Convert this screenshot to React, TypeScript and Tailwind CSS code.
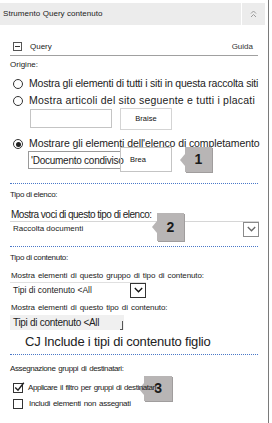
import React from "react";

const Dotted = ({ className }: { className: string }) => (
  <div className={`mx-[10px] border-t border-dotted border-[#4a78c8] ${className}`} />
);

const Callout = ({ n, className }: { n: string; className: string }) => (
  <div className={`absolute flex items-center justify-center bg-[#b8b5b5] text-[14px] font-bold text-[#1a1a1a] shadow-[1px_1px_0_#a09d9d] ${className}`}>
    <span className="absolute -left-[5px] top-1/2 -translate-y-1/2 border-y-[6px] border-r-[5px] border-y-transparent border-r-[#b8b5b5]" />
    {n}
  </div>
);

const Radio = ({ checked }: { checked?: boolean }) => (
  <span className="flex h-[10px] w-[10px] shrink-0 items-center justify-center rounded-full border border-[#333] bg-white">
    {checked && <span className="h-[5px] w-[5px] rounded-full bg-[#222]" />}
  </span>
);

const Chevron = ({ color }: { color: string }) => (
  <svg width="9" height="6" viewBox="0 0 9 6" fill="none" stroke={color} strokeWidth="1.3">
    <path d="M0.8 1 L4.5 4.8 L8.2 1" />
  </svg>
);

const Check = ({ checked }: { checked?: boolean }) => (
  <span className="relative flex h-[10px] w-[10px] shrink-0 border border-[#333] bg-white">
    {checked && (
      <svg className="absolute -top-[2px] left-0" width="11" height="10" viewBox="0 0 11 10" fill="none" stroke="#222" strokeWidth="1.4">
        <path d="M1.2 5.5 L4 8.3 L9.8 0.8" />
      </svg>
    )}
  </span>
);

export default function App() {
  return (
    <div className="relative h-[423px] w-[272px] overflow-hidden whitespace-nowrap bg-white font-['Liberation_Sans',Arial,sans-serif] text-[#222]">
      <div className="absolute right-[3px] top-0 h-full w-px bg-[#7a7a7a]" />
      <div className="w-[268px]">
        {/* header */}
        <div className="mt-[3px] flex h-[22px] w-[265px] bg-[#ececec]">
          <div className="flex flex-1 items-center border-r border-white pl-[3px] text-[8px] tracking-[0.05px]">Strumento Query contenuto</div>
          <div className="flex w-[23px] items-center justify-center">
            <svg width="7" height="8" viewBox="0 0 7 8" fill="none" stroke="#9a9a9a" strokeWidth="1">
              <path d="M1 3.5 L3.5 1 L6 3.5 M1 7 L3.5 4.5 L6 7" />
            </svg>
          </div>
        </div>

        {/* query row */}
        <div className="mx-[10px] mt-[16px] flex h-[15px] items-start border-b border-[#a0a0a0] text-[8px] leading-[11px]">
          <span className="ml-[3px] mt-[1px] flex h-[9px] w-[9px] items-center justify-center border border-[#555]">
            <span className="h-px w-[5px] bg-[#333]" />
          </span>
          <span className="ml-[8px]">Query</span>
          <span className="ml-auto mr-[5px] text-[#333]">Guida</span>
        </div>

        <div className="ml-[10px] mt-[3px] text-[8px] leading-[11px]">Origine:</div>

        {/* origin radios */}
        <div className="ml-[13px] mt-[6px] flex h-[16px] items-center gap-[6px] text-[10.5px] tracking-[-0.2px]">
          <Radio />
          <span>Mostra gli elementi di tutti i siti in questa raccolta siti</span>
        </div>
        <div className="ml-[13px] mt-px flex h-[16px] items-center gap-[6px] text-[10.5px] tracking-[0.22px]">
          <Radio />
          <span>Mostra articoli del sito seguente e tutti i placati</span>
        </div>
        <div className="-mt-px ml-[30px] flex items-start">
          <div className="mt-px h-[19px] w-[82px] border border-[#c4c4c4]" />
          <div className="ml-[8px] flex h-[22px] w-[52px] items-center justify-center border border-[#d4d4d4] text-[7.5px] text-[#111]">Braise</div>
        </div>

        <div className="ml-[13px] mt-[6px] flex h-[16px] items-center gap-[6px] text-[10.5px] tracking-[-0.1px]">
          <Radio checked />
          <span>Mostrare gli elementi dell'elenco di completamento</span>
        </div>
        <div className="relative -mt-[5px] ml-[28px] flex items-start">
          <div className="mt-[4px] flex h-[18px] w-[93px] items-center border border-[#9a9a9a] pl-[2px] text-[10px] tracking-[-0.25px]">'Documento condiviso</div>
          <div className="-ml-px flex h-[25px] w-[52px] items-center border border-[#c4c4c4] pl-[9px] text-[7.5px] text-[#111]">Brea</div>
          <Callout n="1" className="left-[157px] top-0 h-[25px] w-[27px]" />
        </div>

        <Dotted className="mt-[11px]" />
        <div className="ml-[10px] mt-[5px] text-[8px] leading-[11px] tracking-[-0.3px]">Tipo di elenco:</div>

        {/* list type */}
        <div className="relative mt-[8px]">
          <div className="ml-[11px] text-[10px] leading-[13px] tracking-[-0.5px]">Mostra voci di questo tipo di elenco:</div>
          <div className="ml-[10px] flex h-[15px] w-[249px] items-center border-t border-[#d6d6d6] pl-[3px] text-[8px]">
            <span>Raccolta documenti</span>
            <span className="ml-auto flex h-[15px] w-[16px] items-center justify-center border border-[#8a8a8a]"><Chevron color="#666" /></span>
          </div>
          <Callout n="2" className="left-[157px] top-[5px] h-[28px] w-[27px]" />
        </div>

        <Dotted className="mt-[10px]" />
        <div className="ml-[10px] mt-[5px] text-[8px] leading-[11px] tracking-[-0.3px]">Tipo di contenuto:</div>

        {/* content type */}
        <div className="ml-[11px] mt-[7px] text-[8px] leading-[11px] tracking-[-0.1px] [word-spacing:1px]">Mostra elementi di questo gruppo di tipo di contenuto:</div>
        <div className="ml-[10px] mt-px flex h-[15px] w-[136px] items-center border-t border-[#e0e0e0] pl-[3px] text-[8.5px]">
          <span>Tipi di contenuto &lt;All</span>
          <span className="ml-auto flex h-[15px] w-[16px] items-center justify-center border border-[#333]"><Chevron color="#111" /></span>
        </div>

        <div className="ml-[11px] mt-[5px] text-[8px] leading-[11px] tracking-[-0.1px] [word-spacing:1px]">Mostra elementi di questo tipo di contenuto:</div>
        <div className="ml-[10px] mt-[2px] flex h-[15px] w-[114px] items-center bg-[#f0f0f0] pl-[3px] text-[10px] tracking-[-0.3px]">
          <span>Tipi di contenuto &lt;All</span>
          <span className="ml-auto mr-px mt-[6px] h-[9px] w-[3px] border-b border-r border-[#555]" />
        </div>
        <div className="ml-[25px] mt-[4px] text-[13px] leading-[16px] tracking-[-0.2px]">CJ Include i tipi di contenuto figlio</div>

        <Dotted className="mt-[4px]" />
        <div className="ml-[10px] mt-[8px] text-[8px] leading-[11px] tracking-[-0.4px] [word-spacing:1px]">Assegnazione gruppi di destinatari:</div>

        {/* audience */}
        <div className="relative ml-[13px] mt-[8px] flex h-[12px] items-center gap-[5px] text-[8px] tracking-[-0.45px] [word-spacing:1px]">
          <Callout n="3" className="left-[131px] -top-[6px] h-[25px] w-[28px]" />
          <Check checked />
          <span className="relative">Applicare il filtro per gruppi di destinatari</span>
        </div>
        <div className="ml-[13px] mt-[4px] flex h-[12px] items-center gap-[6px] text-[8px] tracking-[-0.3px] [word-spacing:1px]">
          <Check />
          <span>Includi elementi non assegnati</span>
        </div>
      </div>
    </div>
  );
}
